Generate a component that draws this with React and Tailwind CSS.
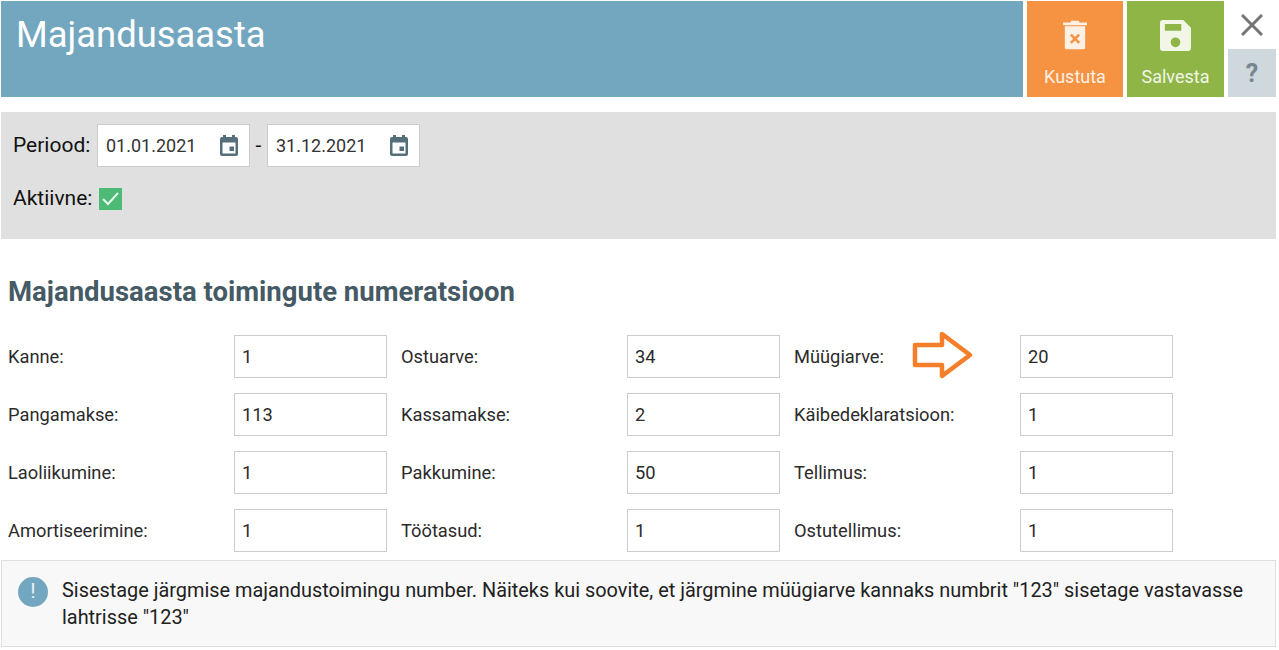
import React from 'react';

const rows = [
    [['Kanne:', '1'], ['Ostuarve:', '34'], ['Müügiarve:', '20']],
    [['Pangamakse:', '113'], ['Kassamakse:', '2'], ['Käibedeklaratsioon:', '1']],
    [['Laoliikumine:', '1'], ['Pakkumine:', '50'], ['Tellimus:', '1']],
    [['Amortiseerimine:', '1'], ['Töötasud:', '1'], ['Ostutellimus:', '1']],
];

const CalendarIcon = () => (
    <svg width="24" height="24" viewBox="0 0 24 24" fill="#546e7a">
        <path d="M19 3h-1V1h-3v2H9V1H6v2H5C3.900 3 3 3.900 3 5v15c0 1.100.9 2 2 2h14c1.100 0 2-.9 2-2V5c0-1.100-.9-2-2-2zm-.5 16.500h-13V8.500h13v11z" />
        <path d="M12.500 12.500h4.500v4.500h-4.500z" />
    </svg>
);

const DateField = ({ value }) => (
    <div className="flex h-[43px] w-[153px] items-center justify-between border border-[#ccc] bg-white pl-2 pr-2 text-[18px] text-[#333]">
        <span>{value}</span>
        <CalendarIcon />
    </div>
);

const App = () => {
    return (
        <div className="relative h-[650px] w-[1279px] overflow-hidden bg-white font-['Roboto',sans-serif]">
            <div className="flex gap-1 pl-px pt-px">
                <div className="h-24 w-[1022px] bg-[#73a7bf] pl-[15px] pt-[13px] text-[36.400px] leading-[42px] text-white">Majandusaasta</div>
                <button className="flex h-24 w-24 flex-col items-center bg-[#f69343] pt-[19px] text-[#fdf0e5]">
                    <svg width="24" height="31" viewBox="0 0 26 32" fill="currentColor">
                        <path d="M9 0h8l1 2h8v3H0V2h8z" />
                        <path fillRule="evenodd" d="M2 7h22v23a2 2 0 0 1-2 2H4a2 2 0 0 1-2-2zm7.500 8-2 2 3.500 3.500-3.500 3.500 2 2 3.500-3.500 3.500 3.500 2-2-3.500-3.500 3.500-3.500-2-2-3.500 3.500z" transform="translate(0 -1)" />
                    </svg>
                    <span className="mt-4 text-[18px] leading-5">Kustuta</span>
                </button>
                <button className="flex h-24 w-[97px] flex-col items-center bg-[#8fb547] pt-[19px] text-[#f1f6e7]">
                    <svg width="31" height="31" viewBox="0 0 32 32" fill="currentColor">
                        <path fillRule="evenodd" d="M3 0h21l8 8v21a3 3 0 0 1-3 3H3a3 3 0 0 1-3-3V3a3 3 0 0 1 3-3zm2 4v7h17V4zm11 14a5 5 0 1 0 0 10 5 5 0 0 0 0-10z" />
                    </svg>
                    <span className="mt-4 text-[18px] leading-5">Salvesta</span>
                </button>
                <div className="flex w-12 flex-col">
                    <div className="flex h-12 items-center justify-center">
                        <svg width="22" height="22" viewBox="0 0 22 22" stroke="#757575" strokeWidth="3" fill="none">
                            <path d="M1 1l20 20M21 1L1 21" />
                        </svg>
                    </div>
                    <div className="flex h-12 items-center justify-center bg-[#cfd8dc] pt-px text-[25px] font-bold text-[#78868d]">?</div>
                </div>
            </div>

            <div className="mx-px mt-[15px] h-[127px] w-[1275px] bg-[#e0e0e0] pl-3 pt-3 text-[21px] text-[#111]">
                <div className="flex items-center">
                    <span className="w-[84px]">Periood:</span>
                    <DateField value="01.01.2021" />
                    <span className="w-[17px] text-center">-</span>
                    <DateField value="31.12.2021" />
                </div>
                <div className="mt-4 flex items-center">
                    <span className="w-[86px]">Aktiivne:</span>
                    <span className="flex h-[22px] w-[23px] items-center justify-center bg-[#4dbb75]">
                        <svg width="17" height="14" viewBox="0 0 17 14" fill="none" stroke="#e8f7ee" strokeWidth="2">
                            <path d="M1 7l5 5L16 1" />
                        </svg>
                    </span>
                </div>
            </div>

            <h2 className="mt-[37px] pl-2 text-[27.500px] font-bold leading-8 text-[#455a64]">Majandusaasta toimingute numeratsioon</h2>

            <div className="mt-[27px] flex flex-col gap-[15px] pl-2">
                {rows.map((row, i) => (
                    <div key={i} className="flex">
                        {row.map(([label, value]) => (
                            <div key={label} className="flex w-[393px] items-center text-[18.300px] text-[#2b2b2b]">
                                <span className="w-[226px]">{label}</span>
                                <div className="flex h-[43px] w-[153px] items-center border border-[#ccc] bg-white pl-[7px]">{value}</div>
                            </div>
                        ))}
                    </div>
                ))}
            </div>

            <svg className="absolute left-[911px] top-[330px]" width="64" height="50" viewBox="0 0 64 50" fill="#fff" stroke="#f57e2b" strokeWidth="4.500" strokeLinejoin="round">
                <path d="M4 15h27V4l28 21-28 21V35H4z" />
            </svg>

            <div className="absolute left-px top-[560px] flex h-[87px] w-[1275px] border border-[#e0e0e0] bg-[#f8f8f8] pl-4 pr-4 pt-[15px]">
                <span className="mt-px flex h-[30px] w-[30px] shrink-0 items-center justify-center rounded-full bg-[#73a7bf] text-[21px] text-[#e8f1f5]">!</span>
                <p className="ml-[14px] mt-px text-[19.900px] leading-[27px] text-[#212121]">
                    Sisestage järgmise majandustoimingu number. Näiteks kui soovite, et järgmine müügiarve kannaks numbrit "123" sisetage vastavasse lahtrisse "123"
                </p>
            </div>
        </div>
    );
};

export default App;
